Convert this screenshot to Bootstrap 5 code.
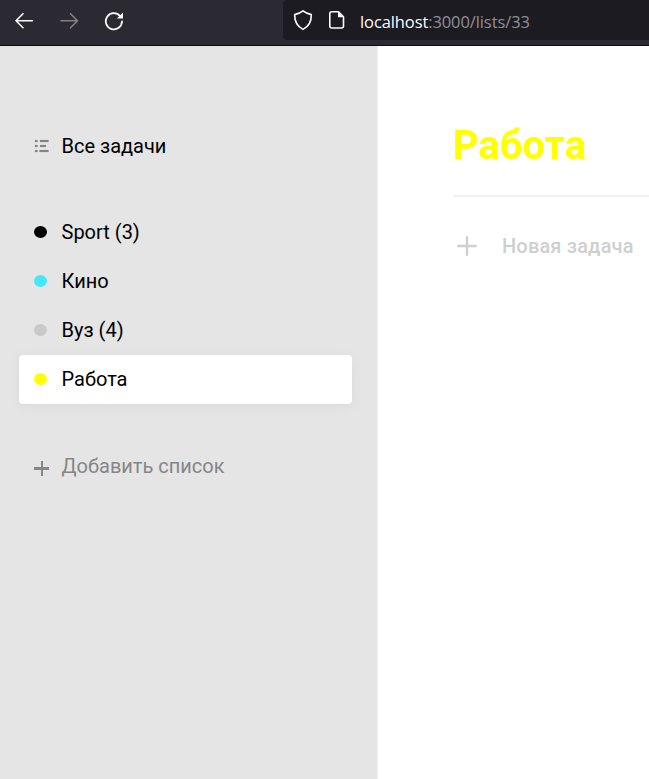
<!DOCTYPE html>
<html lang="ru">
<head>
<meta charset="utf-8">
<title>Работа</title>
<link href="https://cdn.jsdelivr.net/npm/bootstrap@5.3.0/dist/css/bootstrap.min.css" rel="stylesheet">
<style>
body{font-family:Roboto,"Liberation Sans",sans-serif;font-size:20px;line-height:24px;color:#000}
svg{display:block;flex:none}
.browser-bar{height:46px;background:#2b2a33;border-bottom:1px solid #0c0c0d;padding-left:14px}
.nav-icons{width:269px;height:42px}
.nav-icons svg+svg{margin-left:25px}
.address{height:40px;background:#1c1b22;border-radius:4px 0 0 4px;padding-left:9px;color:#8f8f96;font-family:"Open Sans","Noto Sans",sans-serif;font-size:16.5px}
.address b{color:#fbfbfe;font-weight:400}
.page-icon{margin-left:14px}
.url{margin-left:14px;letter-spacing:-.1px;line-height:22px;padding-top:4px}
.sidebar{width:378px;background:#e5e5e5;border-right:1px solid #efefef;padding:76px 25px 0 19px}
.side-item{height:49px;padding:0 0 2px 15px;border-radius:4px}
.side-item.selected{background:#fff;box-shadow:0 2px 13px rgba(0,0,0,.05)}
.mark-box{width:27.5px}
.dot{width:13px;height:12px;border-radius:50%}
.dot-black{background:#000}.dot-cyan{background:#42e8fb}.dot-grey{background:#c9c9c9}.dot-yellow{background:#ff0}
.list-group-gap{margin-top:37px}
.add-list{margin-top:38px;color:#868686}
.add-icon{padding-top:5px}
.tasks{padding:75px 0 0 75px}
.list-title{font-size:40px;font-weight:700;line-height:50px;color:#ff0;padding-bottom:24px;border-bottom:2px solid #f2f2f2}
.new-task{margin-top:37px;color:#cfcfcf;font-weight:500;padding-left:3px;letter-spacing:.17px}
.new-task span{margin-left:24px}
</style>
<script src="https://cdn.jsdelivr.net/npm/bootstrap@5.3.0/dist/js/bootstrap.bundle.min.js"></script>
</head>
<body class="vh-100 d-flex flex-column overflow-hidden bg-white">
<header class="browser-bar d-flex flex-shrink-0">
  <div class="nav-icons d-flex align-items-center flex-shrink-0">
    <svg width="20" height="20" fill="none" stroke="#fbfbfe" stroke-width="1.6" stroke-linecap="round" stroke-linejoin="round"><path d="M18.500 9.700H2M9 2.700 2 9.700 9 16.700"/></svg>
    <svg width="20" height="20" fill="none" stroke="#85807f" stroke-width="1.600" stroke-linecap="round" stroke-linejoin="round"><path d="M2 9.700H18.500M11.500 2.700 18.500 9.700 11.500 16.700"/></svg>
    <svg width="20" height="20" fill="none" stroke="#fbfbfe" stroke-width="1.800" stroke-linecap="round"><path d="M16.200 5.200A8.100 8.100 0 1 0 18 10.300"/><path d="M19 1.500V7.400H12.900Z" fill="#fbfbfe" stroke="none"/></svg>
  </div>
  <div class="address d-flex align-items-center flex-grow-1">
    <svg width="22" height="22" fill="none" stroke="#fbfbfe" stroke-width="1.600" stroke-linejoin="round"><path d="M11 1.900C13.500 3.900 16 4.900 19.300 5.600C19.500 12 17.300 17.300 11 20.400C4.700 17.300 2.500 12 2.700 5.600C6 4.900 8.500 3.900 11 1.900Z"/></svg>
    <svg class="page-icon" width="18" height="20" fill="none" stroke="#fbfbfe" stroke-width="1.600" stroke-linejoin="round"><path d="M10.500 1.800H3.800Q1.800 1.800 1.800 3.800V16Q1.800 18 3.800 18H13.500Q15.500 18 15.500 16V6.800Z"/><path d="M10 1.800V7.200H15.500Z" fill="#fbfbfe" stroke="none"/></svg>
    <div class="url text-nowrap"><b>localhost</b>:3000/lists/33</div>
  </div>
</header>
<div class="d-flex flex-grow-1">
  <aside class="sidebar flex-shrink-0">
    <div class="side-item d-flex align-items-center">
      <span class="mark-box"><svg width="16" height="14" fill="#848484"><path d="M1 1h2.500v2H1zM6 1h8.500v2H6zM1 6h2.500v2H1zM6 6h6v2H6zM1 11h2.500v2H1zM5.500 11h9v2h-9z" stroke="#848484" stroke-opacity=".3" stroke-width=".6"/></svg></span>Все задачи
    </div>
    <nav class="list-group-gap">
      <div class="side-item d-flex align-items-center"><span class="mark-box"><span class="dot dot-black d-block"></span></span>Sport (3)</div>
      <div class="side-item d-flex align-items-center"><span class="mark-box"><span class="dot dot-cyan d-block"></span></span>Кино</div>
      <div class="side-item d-flex align-items-center"><span class="mark-box"><span class="dot dot-grey d-block"></span></span>Вуз (4)</div>
      <div class="side-item selected d-flex align-items-center"><span class="mark-box"><span class="dot dot-yellow d-block"></span></span>Работа</div>
    </nav>
    <div class="side-item add-list d-flex align-items-center">
      <span class="mark-box add-icon"><svg width="15" height="15" fill="#868686"><path d="M7 0h2v15H7zM0 6h15v3H0z"/></svg></span>Добавить список
    </div>
  </aside>
  <main class="tasks flex-grow-1">
    <h1 class="list-title mb-0">Работа</h1>
    <div class="new-task d-flex align-items-center text-nowrap">
      <svg width="22" height="22" fill="none" stroke="#cfcfcf" stroke-width="2.400" stroke-linecap="round"><path d="M11 2.300V19.700M2.300 11H19.700"/></svg><span>Новая задача</span>
    </div>
  </main>
</div>
</body>
</html>
